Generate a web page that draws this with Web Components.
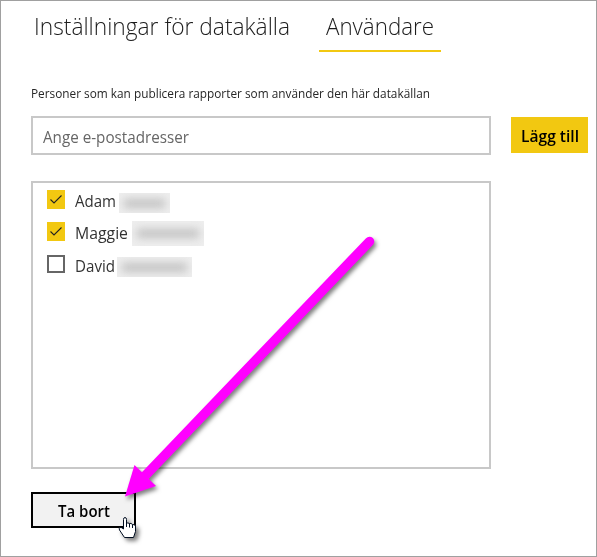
<!DOCTYPE html>
<html lang="sv">
<head>
<meta charset="utf-8">
<title>Användare</title>
<style>
html,body{margin:0;height:557px;overflow:hidden;background:#fff}
</style>
</head>
<body>
<datasource-page></datasource-page>
<script>
const define = (name, html, setup) => customElements.define(name, class extends HTMLElement {
  connectedCallback() {
    if (this.shadowRoot) return;
    const t = document.createElement('template');
    t.innerHTML = html;
    this.attachShadow({mode: 'open'}).append(t.content.cloneNode(true));
    if (setup) setup(this, this.shadowRoot);
  }
});

// A single line of text condensed or widened to the width given in "w".
define('fit-text', `<style>
:host{display:block;white-space:nowrap;flex:none}
span{display:inline-block;transform-origin:0 50%}
</style><span><slot></slot></span>`, (host, root) => {
  const w = +host.getAttribute('w');
  const s = root.querySelector('span');
  host.style.width = w + 'px';
  s.style.transform = 'scaleX(' + w / s.getBoundingClientRect().width + ')';
});

define('tab-item', `<style>
:host{display:block;box-sizing:border-box;height:51px;padding:8px 7px 0;font-size:24px;font-weight:300;line-height:34px;border-bottom:2px solid transparent;color:#1c1c1c}
:host([selected]){border-color:#f2c811}
</style><slot></slot>`);

define('text-field', `<style>
:host{display:flex;box-sizing:border-box;width:460px;height:39px;border:2px solid #c8c8c8;padding:8px 0 0 10px;font-size:15.5px;line-height:22px;color:#666}
</style><slot></slot>`);

define('push-button', `<style>
:host{display:flex;box-sizing:border-box;justify-content:center;height:36px;width:77px;padding-top:8px;background:#f2c811;color:#000;font-size:15.5px;font-weight:600;line-height:22px}
:host([outline]){width:105px;padding-top:6px;background:#f2f2f2;border:2px solid #000}
</style><slot></slot>`);

define('check-box', `<style>
:host{display:block;box-sizing:border-box;flex:none;width:18px;height:18px;border:2px solid #666}
:host([checked]){border:0;height:19px;background:#f2c811}
svg{display:none}
:host([checked]) svg{display:block}
</style><svg width="18" height="19"><path d="M3.5 9.500 7 13 14.500 5.500" fill="none" stroke="#222" stroke-width="1.1"/></svg>`);

// Surname hidden behind a soft grey smear.
define('redacted-name', `<style>
:host{display:block;flex:none;overflow:hidden;background:#eee}
i{display:block;height:9px;margin:6px 5px 0;background:#c2c2c2;filter:blur(4px)}
</style><i></i>`, (host, root) => {
  host.style.cssText = `width:${host.getAttribute('w')}px;height:${host.getAttribute('h')}px;margin-top:${host.getAttribute('y')}px;margin-left:${host.getAttribute('x')}px`;
  root.querySelector('i').style.marginTop = (host.getAttribute('smear') || 6) + 'px';
});

define('user-row', `<style>
:host{display:flex;height:32.4px;font-size:15.5px;line-height:22px;color:#333}
check-box{margin-right:10px}
slot{display:flex}
</style><check-box></check-box><slot></slot>`, (host, root) => {
  if (host.hasAttribute('checked')) root.querySelector('check-box').setAttribute('checked', '');
});

define('user-list', `<style>
:host{display:block;box-sizing:border-box;width:460px;height:288px;border:2px solid #c8c8c8;padding:7px 0 0 14px}
</style><slot></slot>`);

define('pointer-overlay', `<style>
:host{position:absolute;inset:-1px;pointer-events:none}
svg{display:block}
.a{filter:drop-shadow(2px 3px 2px rgba(0,0,0,.5))}
.h{filter:drop-shadow(3px 3px 2px rgba(0,0,0,.5))}
</style><svg width="597" height="557">
<g class="a"><path d="M369.500 241.500 142 479" stroke="#f0f" stroke-width="9.6" stroke-linecap="round"/><path d="M125 496.500 134.500 465 156 486Z" fill="#f0f"/></g>
<path class="h" d="M123.500 529V519.500Q123.500 517.500 125 517.500T126.500 519.500V523.500Q127.500 522.300 129.500 523.500Q131 522.800 132.500 524.500Q134.500 524.200 135.500 526V531.500L133.500 537.500H124.500L119.500 530Q118.500 527.700 120 527.500Q121.500 527.200 123.500 529" fill="#fff" stroke="#000d20" stroke-width="1"/>
<path d="M126.500 523v4M129.500 523.500v4M132.500 524.500v3.500" fill="none" stroke="#000d20"/>
</svg>`);

define('datasource-page', `<style>
:host{display:block;box-sizing:border-box;position:relative;width:597px;height:557px;border:1px solid #a0a0a0;background:#fff;padding-left:30px;font-family:"Open Sans","Noto Sans",sans-serif}
nav{display:flex;gap:22px;margin-left:-4px}
.hint{margin-top:33px;height:31px;font-size:12.3px;line-height:18px;color:#262626}
.add{display:flex;gap:20px}
.add push-button{margin-top:1px}
user-list{margin-top:26px}
.actions{margin-top:23px}
</style>
<nav><tab-item><fit-text w="256">Inställningar för datakälla</fit-text></tab-item><tab-item selected><fit-text w="108">Användare</fit-text></tab-item></nav>
<div class="hint"><fit-text w="399">Personer som kan publicera rapporter som använder den här datakällan</fit-text></div>
<div class="add"><text-field><fit-text w="146">Ange e-postadresser</fit-text></text-field><push-button><fit-text w="58">Lägg till</fit-text></push-button></div>
<user-list>
<user-row checked><fit-text w="41">Adam</fit-text><redacted-name x="3" y="3" w="51" h="20"></redacted-name></user-row>
<user-row checked><fit-text w="53">Maggie</fit-text><redacted-name x="4" y="-1" w="72" h="25" smear="8"></redacted-name></user-row>
<user-row><fit-text w="40">David</fit-text><redacted-name x="2" y="2" w="75" h="20"></redacted-name></user-row>
</user-list>
<div class="actions"><push-button outline><fit-text w="52">Ta bort</fit-text></push-button></div>
<pointer-overlay></pointer-overlay>`);
</script>
</body>
</html>
